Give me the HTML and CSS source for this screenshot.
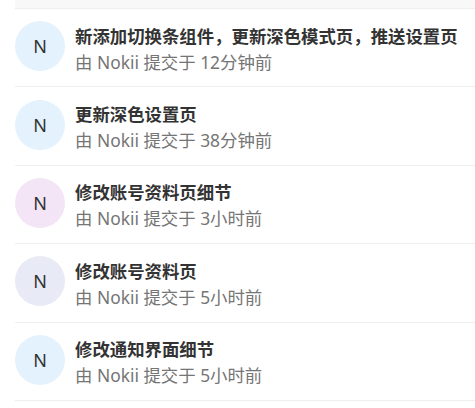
FILE: index.html
```html
<!DOCTYPE html>
<html lang="zh-CN">
<head>
    <meta charset="UTF-8">
    <title>提交记录</title>
    <link rel="stylesheet" href="styles.css">
</head>
<body>
    <div class="commit-list">
        <div class="commit-prev"></div>
        <div class="commit">
            <div class="avatar blue">N</div>
            <div class="commit-text">
                <div class="commit-title">新添加切换条组件，更新深色模式页，推送设置页</div>
                <div class="commit-meta">由 Nokii 提交于 12分钟前</div>
            </div>
        </div>
        <div class="commit">
            <div class="avatar blue">N</div>
            <div class="commit-text">
                <div class="commit-title">更新深色设置页</div>
                <div class="commit-meta">由 Nokii 提交于 38分钟前</div>
            </div>
        </div>
        <div class="commit">
            <div class="avatar purple">N</div>
            <div class="commit-text">
                <div class="commit-title">修改账号资料页细节</div>
                <div class="commit-meta">由 Nokii 提交于 3小时前</div>
            </div>
        </div>
        <div class="commit">
            <div class="avatar indigo">N</div>
            <div class="commit-text">
                <div class="commit-title">修改账号资料页</div>
                <div class="commit-meta">由 Nokii 提交于 5小时前</div>
            </div>
        </div>
        <div class="commit">
            <div class="avatar blue">N</div>
            <div class="commit-text">
                <div class="commit-title">修改通知界面细节</div>
                <div class="commit-meta">由 Nokii 提交于 5小时前</div>
            </div>
        </div>
    </div>
</body>
</html>
```

FILE: styles.css
```css
* {
    box-sizing: border-box;
    margin: 0;
    padding: 0;
}
body {
    font-family: "Noto Sans", "Noto Sans CJK SC", sans-serif;
    background-color: white;
    color: #333;
}
.commit-list {
    margin-left: 15px;
    border-bottom: 1px solid #eee;
}
.commit-prev {
    height: 8px;
    background-color: #f8f8f8;
}
.commit {
    display: flex;
    align-items: center;
    height: 78.4px;
    border-top: 1px solid #eee;
    padding-bottom: 3px;
}
.avatar {
    width: 50px;
    height: 50px;
    border-radius: 50%;
    display: flex;
    align-items: center;
    justify-content: center;
    font-size: 18px;
    color: #333;
    flex-shrink: 0;
}
.avatar.blue {
    background-color: #e3f2fd;
}
.avatar.purple {
    background-color: #f3e5f5;
}
.avatar.indigo {
    background-color: #e8eaf6;
}
.commit-text {
    margin-left: 10px;
    margin-top: 5px;
    white-space: nowrap;
}
.commit-title {
    font-size: 17.4px;
    font-weight: bold;
    line-height: 26px;
    color: #333;
}
.commit-meta {
    font-size: 17.4px;
    line-height: 26px;
    color: #757575;
}
```
